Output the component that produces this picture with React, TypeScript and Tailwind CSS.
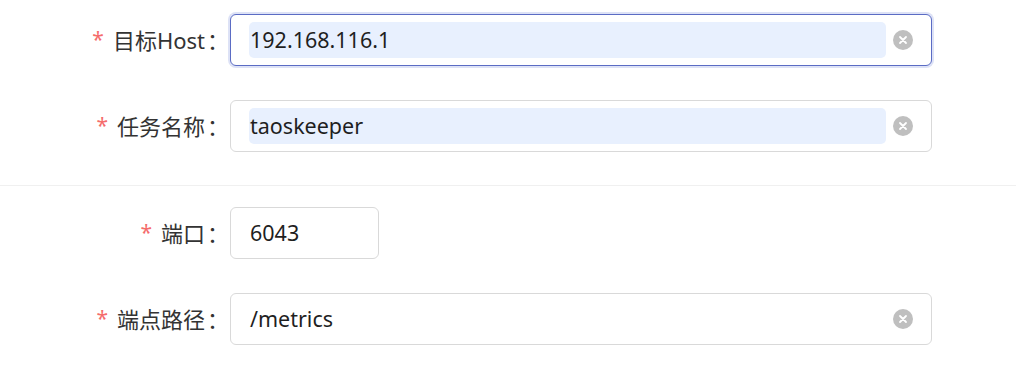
import React from "react";

const ClearIcon = () => (
  <span className="flex h-[20px] w-[20px] shrink-0 items-center justify-center rounded-full bg-[#bfbfbf]">
    <svg width="10" height="10" viewBox="0 0 10 10">
      <path d="M2 2L8 8M8 2L2 8" stroke="#fff" strokeWidth="1.8" strokeLinecap="round" />
    </svg>
  </span>
);

type RowProps = {
  label: string;
  value: string;
  autofill?: boolean;
  focused?: boolean;
  clear?: boolean;
  width?: string;
};

const Row = ({ label, value, autofill, focused, clear, width }: RowProps) => (
  <div className="flex items-center">
    <div className="flex w-[230px] shrink-0 items-center justify-end pr-[1px] text-[22px] text-[#333]">
      <span className="mr-[9px] text-[21px] text-[#f56c6c]">*</span>
      <span>{label}</span>
      <span className="ml-[2px]">：</span>
    </div>
    <div
      className={
        "flex h-[52px] items-center rounded-[6px] border bg-white pl-[18px] pr-[18px] " +
        (focused
          ? "border-[#5b6cc4] shadow-[0_0_0_2px_#dde2f6] "
          : "border-[#d9d9d9] ") +
        (width ? width : "w-[702px]")
      }
    >
      <div
        className={
          "flex h-[36px] flex-1 items-center rounded-[5px] pl-[1px] text-[21.5px] text-[#1f1f1f] " +
          (autofill ? "bg-[#e8f0fe]" : "")
        }
      >
        {value}
      </div>
      {clear && (
        <div className="ml-[7px]">
          <ClearIcon />
        </div>
      )}
    </div>
  </div>
);

export default function App() {
  return (
    <div
      className="h-[365px] w-[1016px] bg-white"
      style={{ fontFamily: '"Noto Sans", "Noto Sans CJK SC", sans-serif' }}
    >
      <div className="flex flex-col gap-[34px] pt-[14px]">
        <Row label="目标Host" value="192.168.116.1" autofill focused clear />
        <Row label="任务名称" value="taoskeeper" autofill clear />
      </div>
      <div className="mt-[33px] h-[1px] w-full bg-[#f0f0f0]" />
      <div className="flex flex-col gap-[34px] pt-[21px]">
        <Row label="端口" value="6043" width="w-[149px]" />
        <Row label="端点路径" value="/metrics" clear />
      </div>
    </div>
  );
}
